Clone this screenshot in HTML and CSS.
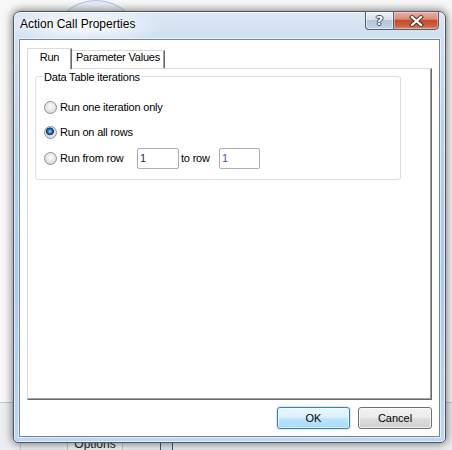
FILE: index.html
```html
<!DOCTYPE html>
<html>
<head>
<meta charset="utf-8">
<title>Action Call Properties</title>
<link rel="stylesheet" href="styles.css">
</head>
<body>
<div class="desktop">
  <div class="bg-ring"></div>
  <div class="bg-bottom">
    <div class="bg-sep"></div>
    <div class="bg-options">Options</div>
    <div class="bg-icon"></div>
  </div>
  <div class="window">
    <div class="titlebar">
      <span class="title">Action Call Properties</span>
      <div class="caption">
        <div class="cbtn help"><span class="qmark">?</span></div>
        <div class="cbtn close">
          <svg width="15" height="12" viewBox="0 0 15 12">
            <path d="M3 2 L12 10 M12 2 L3 10" stroke="#4a3a38" stroke-width="4.2" stroke-linecap="square" fill="none"/>
            <path d="M3 2 L12 10 M12 2 L3 10" stroke="#ffffff" stroke-width="2.2" stroke-linecap="square" fill="none"/>
          </svg>
        </div>
      </div>
    </div>
    <div class="client">
      <div class="tabs">
        <div class="tab active">Run</div>
        <div class="tab">Parameter Values</div>
      </div>
      <div class="panel">
        <fieldset class="group">
          <legend>Data Table iterations</legend>
          <div class="options">
            <label class="row"><input type="radio" name="iter" class="radio"><span>Run one iteration only</span></label>
            <label class="row"><input type="radio" name="iter" class="radio" checked><span>Run on all rows</span></label>
            <div class="row row-range">
              <label class="range-label"><input type="radio" name="iter" class="radio"><span class="from-text">Run from row</span></label>
              <input type="text" class="field field-from" value="1">
              <span class="to-text">to row</span>
              <input type="text" class="field field-to" value="1">
            </div>
          </div>
        </fieldset>
      </div>
      <div class="buttons">
        <button class="btn btn-default">OK</button>
        <button class="btn btn-cancel">Cancel</button>
      </div>
    </div>
  </div>
</div>
</body>
</html>
```
FILE: styles.css
```css
html, body {
  margin: 0;
  padding: 0;
}

body {
  font-family: "Liberation Sans", Arial, sans-serif;
  font-size: 11px;
  color: #000;
}

.desktop {
  position: relative;
  width: 452px;
  height: 450px;
  overflow: hidden;
  background: #f8f8f8;
}

.bg-ring {
  position: absolute;
  left: 50px;
  top: 0;
  width: 90px;
  height: 90px;
  border-radius: 50%;
  border: 1px solid #a6c4ea;
  background: rgba(214, 228, 247, 0.45);
  filter: blur(0.6px);
}

.bg-bottom {
  position: absolute;
  left: 0;
  top: 402px;
  width: 452px;
  height: 48px;
  background: #eceef1;
  border-top: 1px solid #c6c6c6;
}

.bg-sep {
  position: absolute;
  left: 20px;
  top: 30px;
  width: 1px;
  height: 20px;
  background: #cfcfcf;
}

.bg-options {
  position: absolute;
  left: 67px;
  top: 30px;
  width: 56px;
  height: 20px;
  border-left: 1px solid #c9c9c9;
  border-right: 1px solid #c9c9c9;
  background: #f2f2f2;
  font-size: 12px;
  line-height: 14px;
  padding-top: 4px;
  box-sizing: border-box;
  text-align: center;
  color: #222;
}

.bg-icon {
  position: absolute;
  left: 160px;
  top: 38px;
  width: 11px;
  height: 12px;
  border: 1px solid #3b5680;
  border-radius: 1px;
  background: #dfe8f3;
}

.window {
  position: absolute;
  left: 13px;
  top: 11px;
  width: 433px;
  height: 432px;
  box-sizing: border-box;
  border: 1px solid #4a5663;
  border-radius: 7px 7px 5px 5px;
  background:
    radial-gradient(ellipse 80px 20px at 70px 14px, rgba(255, 255, 255, 0.85), rgba(255, 255, 255, 0)),
    linear-gradient(180deg, #dde8f4 0px, #cfe0f2 27px, #b7d2ef 120px, #a9c9ee 260px, #bcd7f4 100%);
  box-shadow: 0 0 9px 1px rgba(0, 0, 0, 0.5), inset 0 0 0 1px rgba(255, 255, 255, 0.65);
  display: flex;
  flex-direction: column;
}

.titlebar {
  height: 27px;
  display: flex;
  align-items: flex-start;
  padding: 0 6px;
  flex: none;
}

.title {
  flex: 1;
  font-size: 12px;
  line-height: 14px;
  padding-top: 5px;
  color: #000;
  text-shadow: 0 0 6px #fff, 0 0 3px #fff;
}

.caption {
  display: flex;
  margin-top: -1px;
}

.cbtn {
  height: 19px;
  box-sizing: border-box;
  border: 1px solid #52606e;
  display: flex;
  align-items: center;
  justify-content: center;
}

.help {
  width: 28px;
  border-right: none;
  border-radius: 0 0 0 4px;
  background: linear-gradient(180deg, #eef3f8 0%, #d8e2ec 45%, #b5c6d8 50%, #c3d3e4 100%);
  box-shadow: inset 0 0 0 1px rgba(255, 255, 255, 0.5);
}

.qmark {
  font-family: "DejaVu Sans", sans-serif;
  font-weight: bold;
  font-size: 13px;
  line-height: 13px;
  color: #fff;
  text-shadow: 1px 0 #3e4650, -1px 0 #3e4650, 0 1px #3e4650, 0 -1px #3e4650;
}

.close {
  width: 46px;
  border-radius: 0 0 4px 0;
  background: linear-gradient(180deg, #eab0a2 0%, #dc8a74 42%, #c54a30 50%, #cf5d40 80%, #dd8a6a 100%);
  box-shadow: inset 0 0 0 1px rgba(255, 255, 255, 0.35);
}

.client {
  flex: 1;
  margin: 0 5px 5px;
  border: 1px solid #7a8591;
  background: #fff;
  display: flex;
  flex-direction: column;
  padding: 8px 7px 7px;
  box-shadow: 0 0 0 1px rgba(255, 255, 255, 0.55);
}

.tabs {
  display: flex;
  align-items: flex-end;
  height: 20px;
  flex: none;
}

.tab {
  box-sizing: border-box;
  height: 18px;
  line-height: 13px;
  border-top: 1px solid #dadada;
  border-right: 1px solid #696969;
  box-shadow: inset -1px 0 0 #a0a0a0;
  width: 93px;
  text-align: center;
  letter-spacing: -0.2px;
  background: #fff;
}

.tab.active {
  width: 45px;
  height: 21px;
  line-height: 17px;
  border-left: 1px solid #dadada;
  margin-bottom: -1px;
  position: relative;
  z-index: 1;
}

.panel {
  flex: 1;
  border: 1px solid;
  border-color: #dadada #696969 #696969 #dadada;
  box-shadow: inset -1px -1px 0 #a0a0a0;
  padding: 0 7px;
}

.group {
  margin: 0;
  width: 366px;
  box-sizing: border-box;
  border: 1px solid #d5dfe5;
  border-radius: 3px;
  padding: 0 8px 10px;
}

.group legend {
  padding: 2px 1px 0;
  margin-left: -1px;
  line-height: 13px;
  letter-spacing: -0.2px;
}

.options {
  display: flex;
  flex-direction: column;
  gap: 3px;
  padding-top: 12px;
}

.row {
  height: 22px;
  display: flex;
  align-items: center;
  letter-spacing: -0.2px;
}

.row-range {
  margin-top: 1px;
}

.range-label {
  display: flex;
  align-items: center;
}

.radio {
  -webkit-appearance: none;
  appearance: none;
  width: 13px;
  height: 13px;
  margin: 0 3px 0 0;
  box-sizing: border-box;
  border-radius: 50%;
  border: 1px solid #8e8f8f;
  background: radial-gradient(circle at 50% 40%, #fbfbfb 0, #e9e9e9 45%, #cdcdcd 100%);
  flex: none;
}

.radio:checked {
  background:
    radial-gradient(circle at 45% 40%, #9fdcff 0, #3a8fd0 1.6px, #0f4d84 3px, #0b2f55 3.7px, rgba(11, 47, 85, 0) 4.2px),
    radial-gradient(circle at 50% 40%, #fbfbfb 0, #e9e9e9 45%, #cdcdcd 100%);
}

.from-text {
  width: 77px;
}

.field {
  box-sizing: border-box;
  height: 21px;
  border: 1px solid #abadb3;
  border-radius: 2px;
  padding: 0 0 0 2px;
  margin: 0;
  font-family: "Liberation Sans", Arial, sans-serif;
  font-size: 11px;
  background: #fff;
  outline: none;
}

.field-from {
  width: 42px;
  color: #1c2c56;
}

.to-text {
  width: 38px;
  margin-left: 2px;
}

.field-to {
  width: 41px;
  color: #6c4c8c;
}

.buttons {
  display: flex;
  justify-content: flex-end;
  gap: 8px;
  margin-top: 7px;
  flex: none;
}

.btn {
  box-sizing: border-box;
  height: 22px;
  border: 1px solid #707070;
  border-radius: 3px;
  padding: 0;
  font-family: "Liberation Sans", Arial, sans-serif;
  font-size: 11px;
  color: #000;
  background: linear-gradient(180deg, #f2f2f2 0%, #ebebeb 49%, #dddddd 50%, #cfcfcf 100%);
  box-shadow: inset 0 0 0 1px rgba(255, 255, 255, 0.7);
}

.btn-default {
  width: 73px;
  border-color: #3c7fb1;
  background: linear-gradient(180deg, #eaf6fd 0%, #d9f0fc 49%, #bee6fd 50%, #a7d9f5 100%);
  box-shadow: inset 0 0 0 1px rgba(255, 255, 255, 0.6), 0 0 0 1px rgba(170, 215, 245, 0.5);
}

.btn-cancel {
  width: 74px;
}
```
